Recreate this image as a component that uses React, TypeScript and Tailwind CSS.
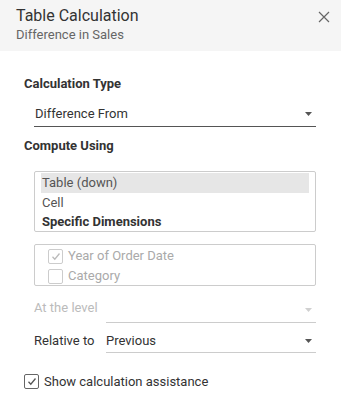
import React from 'react';

const Caret: React.FC<{ faded?: boolean }> = ({ faded }) => (
  <svg width="7" height="4" viewBox="0 0 7 4" className="shrink-0">
    <path d="M0 0h7L3.5 4z" fill={faded ? '#d0d0d0' : '#555'} />
  </svg>
);

const Check: React.FC<{ color: string }> = ({ color }) => (
  <svg width="10" height="9" viewBox="0 0 10 9">
    <path d="M1.5 4.8 L3.8 7.2 L8.5 1.5" fill="none" stroke={color} strokeWidth="1.3" />
  </svg>
);

export default function App() {
  return (
    <div className="w-[341px] h-[415px] bg-white text-[#333] font-['Roboto','Liberation_Sans',sans-serif]">
      <div className="h-[51px] bg-[#f5f5f5] flex justify-between pl-4 pr-[11px] pt-[5px]">
        <div>
          <div className="text-[16px] leading-[21px] text-[#333]">Table Calculation</div>
          <div className="text-[13px] leading-[17px] text-[#666]">Difference in Sales</div>
        </div>
        <svg width="12" height="12" viewBox="0 0 12 12" className="mt-[6px]">
          <path d="M1 1L11 11M11 1L1 11" stroke="#666" strokeWidth="1.2" />
        </svg>
      </div>

      <div className="pl-6 pr-[25px] pt-[24px]">
        <div className="text-[13px] font-bold leading-[18px] text-[#333]">Calculation Type</div>
        <div className="ml-[10px] mt-[12px] h-[22px] border-b border-[#555] flex items-center justify-between pl-[1px] pr-[4px] pb-[3px]">
          <span className="text-[13px] text-[#333]">Difference From</span>
          <Caret />
        </div>

        <div className="text-[13px] font-bold leading-[18px] text-[#333] mt-[10px]">Compute Using</div>
        <div className="ml-[10px] mt-[16px] h-[61px] border border-[#ccc] rounded-[2px] px-[6px] pt-[1px] text-[13px]">
          <div className="h-[20px] bg-[#e6e6e6] pl-[1px] flex items-center text-[#555]">Table (down)</div>
          <div className="h-[19px] pl-[1px] flex items-center text-[#555]">Cell</div>
          <div className="h-[19px] pl-[1px] flex items-center font-bold text-[#333]">Specific Dimensions</div>
        </div>

        <div className="ml-[10px] mt-[12px] h-[42px] overflow-hidden border border-[#ccc] rounded-[2px] pl-[13px] pt-[1px] text-[13px] text-[#aaa]">
          <div className="h-[20px] flex items-center gap-[5px]">
            <span className="w-[15px] h-[15px] border border-[#ccc] rounded-[2px] flex items-center justify-center">
              <Check color="#bbb" />
            </span>
            Year of Order Date
          </div>
          <div className="h-[20px] flex items-center gap-[5px]">
            <span className="w-[15px] h-[15px] border border-[#ccc] rounded-[2px]" />
            Category
          </div>
        </div>

        <div className="ml-[10px] mt-[12px] flex items-end">
          <span className="w-[72px] text-[13px] text-[#bbb] pb-[5px]">At the level</span>
          <div className="flex-1 h-[22px] border-b border-[#ccc] flex items-center justify-end pr-[4px] pb-[2px]">
            <Caret faded />
          </div>
        </div>

        <div className="ml-[10px] mt-[8px] flex items-end">
          <span className="w-[72px] text-[13px] text-[#333] pb-[3px]">Relative to</span>
          <div className="flex-1 h-[22px] border-b border-[#ccc] flex items-center justify-between pr-[4px] pb-[2px]">
            <span className="text-[13px] text-[#333]">Previous</span>
            <Caret />
          </div>
        </div>

        <div className="mt-[19px] flex items-center gap-[5px] text-[13px] text-[#333]">
          <span className="w-[15px] h-[15px] border border-[#666] rounded-[2px] flex items-center justify-center">
            <Check color="#555" />
          </span>
          Show calculation assistance
        </div>
      </div>
    </div>
  );
}
